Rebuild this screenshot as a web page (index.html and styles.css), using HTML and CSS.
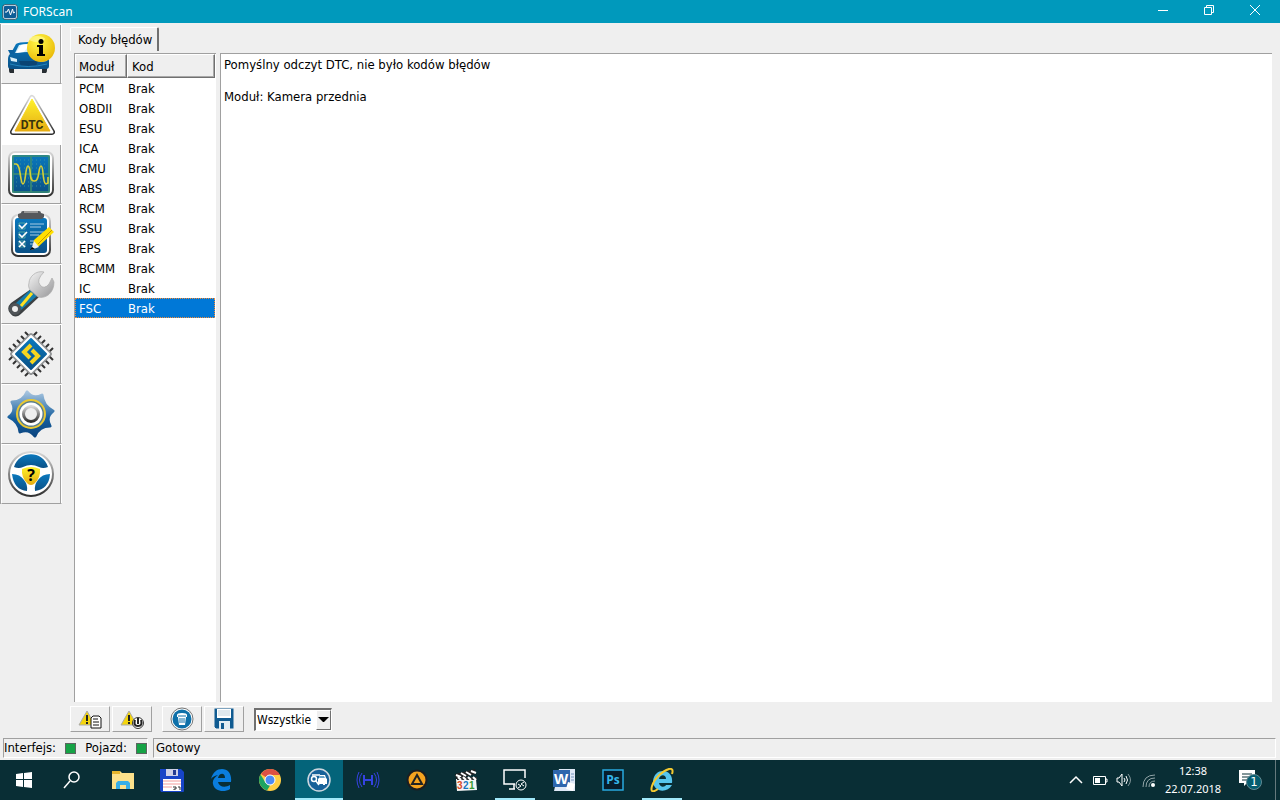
FILE: index.html
```html
<!DOCTYPE html>
<html lang="pl">
<head>
    <meta charset="UTF-8">
    <meta name="viewport" content="width=device-width, initial-scale=1.0">
    <title>FORScan</title>
    <link rel="stylesheet" href="styles.css">
</head>
<body>

    <!-- Shared gradients -->
    <svg class="defs" aria-hidden="true">
        <defs>
            <linearGradient id="blue" x1="0" y1="0" x2="0" y2="1">
                <stop offset="0" stop-color="#0a78bd"/><stop offset="1" stop-color="#0a5187"/>
            </linearGradient>
            <linearGradient id="metal" x1="0" y1="0" x2="0" y2="1">
                <stop offset="0" stop-color="#d8d8d8"/><stop offset="1" stop-color="#303030"/>
            </linearGradient>
            <linearGradient id="yellow" x1="0" y1="0" x2="0" y2="1">
                <stop offset="0" stop-color="#fff22b"/><stop offset="1" stop-color="#e5ac12"/>
            </linearGradient>
            <linearGradient id="gearBlue" x1="0" y1="0" x2="0" y2="1">
                <stop offset="0" stop-color="#a6c4df"/><stop offset="0.6" stop-color="#165f9e"/><stop offset="1" stop-color="#0b4580"/>
            </linearGradient>
            <linearGradient id="silver" x1="0" y1="0" x2="1" y2="1">
                <stop offset="0" stop-color="#f5f5f5"/><stop offset="1" stop-color="#969698"/>
            </linearGradient>
            <radialGradient id="ball" cx="0.4" cy="0.3" r="0.8">
                <stop offset="0" stop-color="#fff94a"/><stop offset="1" stop-color="#e8b200"/>
            </radialGradient>
        </defs>
    </svg>

    <header class="titlebar">
        <svg class="app-icon" viewBox="0 0 16 16" aria-hidden="true">
            <rect x="1" y="1" width="14" height="14" rx="3" fill="#0d5d96" stroke="#e8eef2" stroke-width="1.3"/>
            <rect x="0.4" y="0.4" width="15.2" height="15.2" rx="3.5" fill="none" stroke="#173f55" stroke-width="0.8"/>
            <path d="M3 8h2l1.500-3 2 6 2-6 1 4 1.500-1" fill="none" stroke="#fff"/>
        </svg>
        <h1>FORScan</h1>
        <div class="window-buttons">
            <button type="button" aria-label="Minimalizuj">
                <svg viewBox="0 0 10 10"><path d="M0 5.500h10" stroke="#fff"/></svg>
            </button>
            <button type="button" aria-label="Przywróć">
                <svg viewBox="0 0 10 10"><path d="M2.500 2.500v-2h7v7h-2M.5 2.500h7v7h-7z" fill="none" stroke="#fff"/></svg>
            </button>
            <button type="button" aria-label="Zamknij">
                <svg viewBox="0 0 10 10"><path d="M0 0l10 10M10 0L0 10" stroke="#fff"/></svg>
            </button>
        </div>
    </header>

    <main class="workspace">
        <nav class="sidebar">
            <button type="button" aria-label="Pojazd">
                <svg viewBox="0 0 48 48">
                    <path d="M2 35h5v8H3q-1 0-1-3zM35 35h5v5q0 3-1 3h-4z" fill="#282e33"/>
                    <path d="M9 14q2-2 13-2 10 0 12 2l5 10q3 2 3 7v5q0 3-3 3H4q-3 0-3-3v-7q0-4 3-6z" fill="url(#blue)"/>
                    <path d="M1 20h6v4H3zM38 21h3v3h-3z" fill="#0a61a0"/>
                    <path d="M12 15q9-2 19 0l4 8q-14-2-27 0z" fill="#d4f0fa"/>
                    <path d="M14 15q5-1 9-1l-6 8-8 1z" fill="#fff"/>
                    <path d="M3 27l7 2v3l-6-1zM32 29l8-2v4l-7 1z" fill="#d7edf7"/>
                    <path d="M12 31h19l-2 5H14z" fill="#0a4474"/>
                    <path d="M3 34q18 5 37 0" fill="none" stroke="#2384bc"/>
                    <circle cx="34" cy="18" r="14" fill="url(#ball)"/>
                    <ellipse cx="30" cy="9" rx="8" ry="3" fill="#fffba0" opacity=".6"/>
                    <circle cx="34" cy="11.500" r="2.500"/>
                    <path d="M30 15h6v9h2v2h-8v-2h2v-7h-2z"/>
                </svg>
            </button>
            <button type="button" class="active" aria-label="Kody błędów">
                <svg viewBox="0 0 48 48">
                    <path d="M25 8L45 42H6z" fill="none" stroke="url(#metal)" stroke-width="6" stroke-linejoin="round"/>
                    <path d="M25 8L45 42H6z" fill="#fff" stroke="#fff" stroke-width="3" stroke-linejoin="round"/>
                    <path d="M25 9L43 41H8z" fill="url(#yellow)" stroke="url(#yellow)" stroke-linejoin="round"/>
                    <text x="25" y="39" class="dtc-text">DTC</text>
                </svg>
            </button>
            <button type="button" aria-label="Oscyloskop">
                <svg viewBox="0 0 48 48">
                    <rect x="2" y="2" width="44" height="44" rx="6" fill="#fff" stroke="url(#metal)" stroke-width="2"/>
                    <rect x="5" y="5" width="38" height="38" rx="3" fill="url(#blue)"/>
                    <path d="M9 10h31M9 14h31M9 18h31M9 28h31M9 32h31M9 36h31" stroke="#4fa29c" stroke-width=".7" stroke-dasharray="1 3"/>
                    <path d="M24 6v36M6 24h36M6 6h36v36H6z" fill="none" stroke="#3c8e72" stroke-width="1.500"/>
                    <path d="M7 14h2c5 0 4 20 7 20s2-17 5-18c4 1 0 15 6 15 6 1 4-15 7-15s1 17 5 18l2-1v-6" fill="none" stroke="#d8cf35" stroke-width="1.600"/>
                </svg>
            </button>
            <button type="button" aria-label="Testy">
                <svg viewBox="0 0 48 48">
                    <rect x="5" y="5" width="38" height="41" rx="6" fill="#fff" stroke="url(#metal)" stroke-width="2"/>
                    <rect x="8" y="8" width="32" height="35" rx="3" fill="url(#blue)"/>
                    <path d="M16 1h16q2 0 2 2l3 1v3q-1 2-3 2H14q-2 0-3-2V4l3-1q0-2 2-2z" fill="#55585c"/>
                    <path d="M17 2h14" stroke="#999" stroke-width="2"/>
                    <path d="M12 13h6v6h-6zM12 22h6v6h-6zM12 31h6v6h-6z" fill="none" stroke="#5db1a1" stroke-width=".8"/>
                    <path d="M12 15l3 3 5-5M12 24l3 3 5-5M12 31l6 6M18 31l-6 6" fill="none" stroke="#fff" stroke-width="1.600"/>
                    <path d="M23 14h14M23 17h11M23 22h14M23 25h9M23 31h8M23 34h5" stroke="#a5cbe4"/>
                    <path d="M42 17l5 5-15 14-6 1 1-7z" fill="#ffdf00"/>
                    <path d="M45 20L31 34" stroke="#c59500"/>
                    <path d="M27 31l5 6-8 3z" fill="#eee"/><path d="M25 37l3 2-5 1z"/>
                </svg>
            </button>
            <button type="button" aria-label="Serwis">
                <svg viewBox="0 0 48 48">
                    <path d="M24 19L32 27 15 43Q8 50 3 43-1 38 4 33z" fill="#3c4043"/>
                    <path d="M23 20l7 6-16 14-6-6z" fill="#147cac"/>
                    <path d="M25 23L14 36" stroke="#ffdf20" stroke-width="3"/>
                    <circle cx="8" cy="39" r="4.500" fill="#efefef" stroke="#505458" stroke-width="3"/>
                    <path d="M37 2C29 0 22 7 22 13c-1 3 0 5 1 7l8 7c8 2 16-4 16-15l-2-4-3 6q-5 6-9 1-4-5 4-13z" fill="url(#silver)" stroke="#aaa" stroke-width=".7"/>
                </svg>
            </button>
            <button type="button" aria-label="Programowanie modułów">
                <svg viewBox="0 0 48 48">
                    <path d="M2 18l28 28M6 14l28 28M10 10l28 28M14 6l28 28M18 2l28 28M2 30L30 2M6 34L34 6M10 38L38 10M14 42l28-28M18 46l28-28" stroke="#333" stroke-width="2"/>
                    <path d="M24 5l19 19-19 19L5 24z" fill="#fff" stroke="#939597" stroke-width="4" stroke-linejoin="round"/>
                    <path d="M24 6l18 18-18 18L6 24z" fill="#fff" stroke="#fff" stroke-width="2" stroke-linejoin="round"/>
                    <path d="M24 9l15 15-15 15L9 24z" fill="url(#blue)" stroke="url(#blue)" stroke-width="2" stroke-linejoin="round"/>
                    <path d="M24 15l-7 7 6 6M25 20l6 6-7 7" fill="none" stroke="#f7d51f" stroke-width="4"/>
                </svg>
            </button>
            <button type="button" aria-label="Ustawienia">
                <svg viewBox="0 0 48 48">
                    <path d="M20 2Q26 10 35 5 36 16 46 21 38 27 43 36 32 36 28 46 22 38 13 42 12 32 2 27 10 21 5 12 16 12 20 2z" fill="url(#gearBlue)" stroke="url(#gearBlue)" stroke-width="3" stroke-linejoin="round"/>
                    <circle cx="24" cy="24" r="14" fill="#5a7e8d" stroke="#e9c832" stroke-width="2"/>
                    <circle cx="24" cy="24" r="11.500" fill="#fff"/>
                    <circle cx="24" cy="24" r="7.500" fill="#efefef" stroke="url(#metal)" stroke-width="3"/>
                </svg>
            </button>
            <button type="button" aria-label="Pomoc">
                <svg viewBox="0 0 48 48">
                    <circle cx="24" cy="24" r="22" fill="#fff" stroke="url(#metal)" stroke-width="2"/>
                    <path d="M7 17C12 0 36 0 41 17q-5 2-9 0-8-4-16 0-4 2-9 0z" fill="url(#blue)"/>
                    <path d="M5 24q8 0 12 6 4 5 3 11Q7 40 5 24zM43 24q-8 0-12 6-4 5-3 11 14-2 15-17z" fill="url(#blue)"/>
                    <path d="M15 19q9-4 18 0 1 9-6 15-3 2-6 0-7-6-6-15z" fill="url(#yellow)"/>
                    <text x="24" y="31" class="help-text">?</text>
                </svg>
            </button>
        </nav>

        <section class="content">
            <div class="tabs">
                <button type="button" class="tab">Kody błędów</button>
            </div>

            <div class="panes">
                <div class="module-list">
                    <table>
                        <thead>
                            <tr><th>Moduł</th><th>Kod</th></tr>
                        </thead>
                        <tbody>
                            <tr><td>PCM</td><td>Brak</td></tr>
                            <tr><td>OBDII</td><td>Brak</td></tr>
                            <tr><td>ESU</td><td>Brak</td></tr>
                            <tr><td>ICA</td><td>Brak</td></tr>
                            <tr><td>CMU</td><td>Brak</td></tr>
                            <tr><td>ABS</td><td>Brak</td></tr>
                            <tr><td>RCM</td><td>Brak</td></tr>
                            <tr><td>SSU</td><td>Brak</td></tr>
                            <tr><td>EPS</td><td>Brak</td></tr>
                            <tr><td>BCMM</td><td>Brak</td></tr>
                            <tr><td>IC</td><td>Brak</td></tr>
                            <tr class="selected"><td>FSC</td><td>Brak</td></tr>
                        </tbody>
                    </table>
                </div>
                <div class="details">
                    <p>Pomyślny odczyt DTC, nie było kodów błędów</p>
                    <p>Moduł: Kamera przednia</p>
                </div>
            </div>

            <div class="toolbar">
                <button type="button" aria-label="Odczytaj kody">
                    <svg viewBox="0 0 24 24">
                        <path d="M9 4l8 14H1z" fill="#f4d40c" stroke="#aaa" stroke-linejoin="round"/>
                        <path d="M9 8v6M9 15v2" stroke="#222" stroke-width="2"/>
                        <path d="M15 9h6l2 2v10H13V11z" fill="#fff" stroke="#111" stroke-linejoin="round"/>
                        <path d="M15 12h5M15 15h6M15 18h6" stroke="#111"/>
                    </svg>
                </button>
                <button type="button" aria-label="Autotest">
                    <svg viewBox="0 0 24 24">
                        <path d="M9 4l8 14H1z" fill="#f4d40c" stroke="#aaa" stroke-linejoin="round"/>
                        <path d="M9 8v6M9 15v2" stroke="#222" stroke-width="2"/>
                        <circle cx="18" cy="16" r="5.500" fill="#fff" stroke="#333"/>
                        <path d="M15 13q-2 6 3 6t3-6M18 11v6" fill="none" stroke="#222" stroke-width="2"/>
                    </svg>
                </button>
                <button type="button" class="group-start" aria-label="Wyczyść kody">
                    <svg viewBox="0 0 24 24">
                        <circle cx="12" cy="12" r="11" fill="#fff" stroke="#777"/>
                        <circle cx="12" cy="12" r="9.500" fill="#0e70a9"/>
                        <path d="M7 8q0-2 5-2t5 2v2H7zM8 10h8l-1 8H9z" fill="#fff"/>
                        <path d="M8 9h8M10 11v5M12 11v5M14 11v5" stroke="#0e70a9"/>
                    </svg>
                </button>
                <button type="button" aria-label="Zapisz">
                    <svg viewBox="0 0 24 24">
                        <path d="M2 1h20v21H4l-2-2z" fill="#105b91" stroke="#eee"/>
                        <path d="M5 2h14v9H5z" fill="#fff"/><path d="M6 4h12M6 6h12M6 8h12" stroke="#bed1dc"/>
                        <path d="M7 14h11v8H7z" fill="#e1edf3"/><path d="M9 16h3v6H9z" fill="#105b91"/>
                    </svg>
                </button>
                <div class="filter">
                    <select aria-label="Filtr kodów">
                        <option>Wszystkie</option>
                    </select>
                    <span class="filter-arrow"></span>
                </div>
            </div>
        </section>
    </main>

    <footer class="statusbar">
        <div class="connections">
            <span>Interfejs:</span><i class="led"></i>
            <span>Pojazd:</span><i class="led"></i>
        </div>
        <div class="status">Gotowy</div>
    </footer>

    <div class="taskbar">
        <button type="button" aria-label="Start">
            <svg viewBox="0 0 24 24"><path d="M4 6l7-1v6H4zM12 5l8-1v7h-8zM4 12h7v7l-7-1zM12 12h8v8l-8-1z" fill="#fff"/></svg>
        </button>
        <button type="button" aria-label="Szukaj">
            <svg viewBox="0 0 24 24"><circle cx="14" cy="9" r="5" fill="none" stroke="#fff" stroke-width="1.500"/><path d="M10 13l-6 7" stroke="#fff" stroke-width="1.500"/></svg>
        </button>
        <button type="button" class="app" aria-label="Eksplorator plików">
            <svg viewBox="0 0 24 24"><path d="M1 3h8l2 2h12v16H1z" fill="#fce18b"/><path d="M1 3h8v3H1z" fill="#e5b52d"/><path d="M5 21v-6l2-2h10l2 2v6h-4v-4H9v4z" fill="#37afe7"/></svg>
        </button>
        <button type="button" class="app" aria-label="Total Commander">
            <svg viewBox="0 0 24 24"><path d="M0 1h21l3 3v19q0 1-1 1H1l-1-2z" fill="#1744c7"/><path d="M6 1h12v7H6z" fill="#cdd0e7"/><path d="M13 2h3v5h-3z" fill="#243b91"/><path d="M3 11h18v12H3z" fill="#fff"/><path d="M3 13h18M3 16h18M3 19h9" stroke="#f29b9b"/><path d="M13 19h3v2h-2v1M18 19h2v3" fill="none" stroke="#333"/></svg>
        </button>
        <button type="button" class="app" aria-label="Edge">
            <svg viewBox="0 0 24 24"><path d="M2 11C4 4 8 1 13 1c6 0 10 5 9 13H9c1 5 7 6 12 3v4c-6 4-16 2-17-5-1-4 2-7 5-9-4 1-6 2-7 4zm7-1h7c0-6-6-5-7 0z" fill="#0a7ddd"/></svg>
        </button>
        <button type="button" class="app" aria-label="Chrome">
            <svg viewBox="0 0 24 24"><circle cx="12" cy="12" r="11" fill="#ffce43"/><path d="M12 12L3 6A11 11 0 0 1 22 7H12z" fill="#dd5144"/><path d="M2.500 6.500l5 8 4.500 3-3 5A11 11 0 0 1 2.500 6.500z" fill="#1da462"/><circle cx="12" cy="12" r="5" fill="#4c8bf5" stroke="#fff"/></svg>
        </button>
        <button type="button" class="app current" aria-label="FORScan">
            <svg viewBox="0 0 24 24"><circle cx="12" cy="12" r="11" fill="#176199" stroke="#ccd7df" stroke-width="1.500"/><circle cx="7" cy="11" r="2.500" fill="none" stroke="#fff" stroke-width="1.500"/><path d="M5 7h8" stroke="#fff" stroke-width="1.500"/><path d="M13 7h5l1 3 1 1v5h-2v1h-2v-1h-5v-5l1-1z" fill="#fff"/><path d="M13 8h4l1 2h-6z" fill="#67a2c9"/><path d="M9 13l3 4" stroke="#fff" stroke-width="1.500"/></svg>
        </button>
        <button type="button" class="app" aria-label="Połączenie">
            <svg viewBox="0 0 24 24" fill="none" stroke="#3543e2"><path d="M8 7v10M16 7v10M8 12h8" stroke-width="2"/><path d="M6 5Q1 12 6 19M3 4q-4 8 0 16M18 5q5 7 0 14M21 4q4 8 0 16" stroke-width="1"/></svg>
        </button>
        <button type="button" class="app" aria-label="AIMP">
            <svg viewBox="0 0 24 24"><circle cx="12" cy="12" r="10.500" fill="#1c1d20"/><circle cx="12" cy="12" r="8.500" fill="#f6a31f"/><path d="M12 7l5 9H7z" fill="none" stroke="#222" stroke-width="2"/></svg>
        </button>
        <button type="button" class="app" aria-label="Media Player Classic">
            <svg viewBox="0 0 24 24"><path d="M1 6l20-5 1 5-20 5z" fill="#222"/><path d="M2 7l5 2M7 5l5 3M12 4l5 3M17 3l5 2" stroke="#fff" stroke-width="2"/><path d="M2 11h20l1 11-20 1z" fill="#f5f5f5"/><path d="M3 9h20v3H3z" fill="#333"/><path d="M4 9l3 3M9 9l3 3M14 9l3 3M19 9l3 3" stroke="#fff" stroke-width="2"/><g class="clip-text"><text x="3" y="21" fill="#da4c27">3</text><text x="9" y="21" fill="#1979c3">2</text><text x="15" y="21" fill="#3a9a35">1</text></g></svg>
        </button>
        <button type="button" class="app running" aria-label="Pulpit zdalny">
            <svg viewBox="0 0 24 24" fill="none" stroke="#fff" stroke-width="1.500"><path d="M12 16H1V2h21v8M6 21h6M11 16v5"/><circle cx="18" cy="17" r="5" stroke-width="1"/><path d="M15 16l3 2-3 2M21 14l-3 2 3 2" stroke-width="1"/></svg>
        </button>
        <button type="button" class="app" aria-label="Word">
            <svg viewBox="0 0 24 24"><path d="M7 1h16v22H2z" fill="#dfe9f7"/><path d="M1 2h17v17H1z" fill="#2e66ad"/><path d="M19 6h3M19 9h3M19 12h3" stroke="#7695be"/><path d="M16 14l7 2-2 7-7-2z" fill="#fff"/><text x="2" y="16" class="word-text">W</text></svg>
        </button>
        <button type="button" class="app" aria-label="Photoshop">
            <svg viewBox="0 0 24 24"><rect x="2" y="2" width="20" height="20" fill="#071d2b" stroke="#29a9df" stroke-width="1.500"/><text x="12" y="16" class="ps-text">Ps</text></svg>
        </button>
        <button type="button" class="app running" aria-label="Internet Explorer">
            <svg viewBox="0 0 24 24"><path d="M3 13C4 6 8 3 13 3c6 0 10 5 9 12H9c1 5 6 4 7 2h6c-5 9-19 7-19-4zm6-2h7c0-5-6-5-7 0z" fill="#56c5ed"/><path d="M8 21C4 24 0 25 2 18 4 11 12 3 19 1q5-1 3 5" fill="none" stroke="#f3c930" stroke-width="2"/></svg>
        </button>

        <div class="tray">
            <svg class="tray-icon" viewBox="0 0 16 16"><path d="M2 11l6-6 6 6" fill="none" stroke="#fff" stroke-width="1.500"/></svg>
            <svg class="tray-icon" viewBox="0 0 16 16"><path d="M1.500 4.500h12v8h-12zM14 7h1v3h-1" fill="none" stroke="#fff"/><path d="M3 6h5v5H3z" fill="#fff"/></svg>
            <svg class="tray-icon" viewBox="0 0 16 16"><path d="M1 6h2l3-4v12l-3-4H1zM8 6q2 2 0 4M10 4q3 4 0 8" fill="none" stroke="#fff"/><path d="M12 2q5 6 0 12" fill="none" stroke="#829599"/></svg>
            <svg class="tray-icon wifi" viewBox="0 0 16 16"><path d="M3 15Q3 3 15 3M6 15q0-9 9-9M9 15q0-6 6-6" fill="none" stroke="#91a4a7"/><circle cx="13" cy="13" r="2" fill="#fff"/></svg>
            <div class="clock">
                <time>12:38</time>
                <time>22.07.2018</time>
            </div>
            <button type="button" class="notifications" aria-label="Powiadomienia">
                <svg viewBox="0 0 24 24"><path d="M1 2h16v13H9l-3 3v-3H1z" fill="#fff"/><path d="M4 6h10M4 9h10M4 12h7" stroke="#092e35"/></svg>
                <span class="badge">1</span>
            </button>
        </div>
    </div>

</body>
</html>
```
FILE: styles.css
```css
* {
    box-sizing: border-box;
}

body {
    display: flex;
    flex-direction: column;
    min-height: 100vh;
    margin: 0;
    background-color: #efefef;
    color: #000;
    font-family: Tahoma, "DejaVu Sans Condensed", "DejaVu Sans", sans-serif;
    font-stretch: condensed;
    font-size: 13px;
    line-height: 16px;
}

button,
select {
    padding: 0;
    border: none;
    background: none;
    color: inherit;
    font: inherit;
}

svg {
    display: block;
}

.defs {
    position: absolute;
    width: 0;
    height: 0;
}

/* Title bar */
.titlebar {
    display: flex;
    align-items: center;
    height: 23px;
    padding-left: 2px;
    background-color: #0099bc;
    color: #fff;
}

.app-icon {
    width: 16px;
    height: 16px;
}

h1 {
    margin: 0 0 0 5px;
    font-family: "Noto Sans", sans-serif;
    font-size: 12px;
    font-weight: normal;
}

.window-buttons {
    display: flex;
    align-self: flex-start;
    height: 20px;
    margin-left: auto;
    padding-right: 2px;
}

.window-buttons button {
    display: flex;
    align-items: center;
    justify-content: center;
    width: 46px;
}

.window-buttons svg {
    width: 10px;
    height: 10px;
}

/* Main area */
.workspace {
    display: flex;
    flex: 1;
    padding-top: 1px;
}

.sidebar {
    display: flex;
    flex-direction: column;
    align-self: flex-start;
    width: 62px;
    border-left: 1px solid #a0a0a0;
}

.sidebar button {
    display: flex;
    align-items: center;
    justify-content: center;
    height: 60px;
    padding-right: 1px;
    border: 1px solid #fff;
    border-bottom-color: #a0a0a0;
    box-shadow: inset -1px 0 #a0a0a0;
}

.sidebar button.active {
    background-color: #fff;
    border-bottom-color: #fff;
    box-shadow: none;
}

.sidebar svg {
    width: 48px;
    height: 48px;
}

.dtc-text {
    font: bold 12px Roboto, sans-serif;
    text-anchor: middle;
    fill: #39340d;
}

.help-text {
    font: bold 16px "Open Sans", sans-serif;
    text-anchor: middle;
}

.content {
    display: flex;
    flex: 1;
    flex-direction: column;
    padding: 3px 8px 0 8px;
}

.tabs {
    display: flex;
    height: 26px;
}

.tab {
    height: 24px;
    padding: 0 5px 0 7px;
    border-top: 1px solid #fff;
    border-left: 1px solid #fff;
    border-right: 2px solid #707070;
    border-radius: 2px 2px 0 0;
}

.panes {
    display: flex;
    flex: 1;
    gap: 4px;
    padding-left: 4px;
}

.module-list {
    width: 142px;
    padding-right: 1px;
    border-top: 1px solid #a0a0a0;
    border-left: 1px solid #a0a0a0;
    background-color: #fff;
}

table {
    width: 100%;
    border-collapse: separate;
    border-spacing: 0;
    table-layout: fixed;
}

th {
    height: 24px;
    padding: 1px 4px 0;
    background-color: #efefef;
    border: 1px solid #fff;
    border-right-color: #707070;
    border-bottom-color: #707070;
    box-shadow: inset -1px -1px #a8a8a8;
    font-weight: normal;
    text-align: left;
}

th:first-child {
    width: 52px;
    padding-left: 3px;
}

td {
    height: 20px;
    padding: 1px 0 0 4px;
}

td:last-child {
    padding-left: 1px;
}

.selected {
    background-color: #0078d7;
    color: #fff;
    outline: 1px dotted #f38b37;
    outline-offset: -1px;
}

.details {
    flex: 1;
    padding: 3px;
    border-top: 1px solid #a0a0a0;
    border-left: 1px solid #a0a0a0;
    background-color: #fff;
}

.details p {
    margin: 0 0 16px;
}

.toolbar {
    display: flex;
    align-items: center;
    gap: 2px;
    height: 36px;
    padding-bottom: 2px;
}

.toolbar button {
    display: flex;
    align-items: center;
    justify-content: center;
    width: 40px;
    height: 26px;
    border: 1px solid #fff;
    border-right-color: #a0a0a0;
    border-bottom-color: #a0a0a0;
}

.toolbar .group-start {
    margin-left: 8px;
}

.toolbar svg {
    width: 24px;
    height: 24px;
}

.filter {
    position: relative;
    margin-left: 8px;
}

.filter select {
    appearance: none;
    display: block;
    width: 78px;
    height: 23px;
    padding-left: 1px;
    border: 2px solid #707070;
    border-right: 1px solid #fff;
    border-bottom: 1px solid #fff;
    border-radius: 0;
    background-color: #fff;
    font-size: 12px;
}

.filter-arrow {
    position: absolute;
    top: 2px;
    right: 1px;
    width: 15px;
    height: 20px;
    border: 1px solid #fff;
    border-right-color: #707070;
    border-bottom-color: #707070;
    background-color: #efefef;
    pointer-events: none;
}

.filter-arrow::after {
    content: "";
    display: block;
    margin: 6px 1px;
    border: 5px solid transparent;
    border-top-color: #000;
    border-bottom: none;
}

/* Status bar */
.statusbar {
    display: flex;
    gap: 5px;
    height: 22px;
    padding: 0 4px 2px 3px;
}

.statusbar div {
    display: flex;
    align-items: center;
    border: 1px solid #a0a0a0;
    border-right-color: #fff;
    border-bottom-color: #fff;
}

.connections {
    width: 145px;
    justify-content: space-between;
}

.status {
    flex: 1;
    padding-left: 2px;
}

.led {
    width: 11px;
    height: 11px;
    border: 1px solid #5c6660;
    background-color: #16a346;
}

/* Windows taskbar */
.taskbar {
    display: flex;
    height: 40px;
    background-color: #092e35;
    color: #fff;
}

.taskbar > button {
    display: flex;
    align-items: center;
    justify-content: center;
    width: 48px;
    margin-right: 1px;
}

.taskbar > button:first-child {
    margin-right: 0;
}

.taskbar > button:nth-child(2) {
    margin-right: 3px;
}

.taskbar svg {
    width: 24px;
    height: 24px;
}

.taskbar .current {
    background-color: #04647a;
    box-shadow: inset 0 -2px #a1e9fa;
}

.taskbar .running {
    background: linear-gradient(#a1e9fa, #a1e9fa) center bottom / 40px 2px no-repeat;
}

.clip-text {
    font: bold 10px "Liberation Sans", sans-serif;
}

.word-text {
    font: bold 15px "Liberation Sans", sans-serif;
    fill: #fff;
}

.ps-text {
    font: bold 12px "Open Sans", sans-serif;
    text-anchor: middle;
    fill: #35b6e9;
}

.tray {
    display: flex;
    align-items: center;
    gap: 8px;
    margin-left: auto;
    margin-right: 4px;
    padding-right: 3px;
    border-right: 1px solid #65797d;
}

.taskbar .tray-icon {
    width: 16px;
    height: 16px;
}

.clock {
    width: 58px;
    font-family: "Noto Sans", sans-serif;
    font-size: 11px;
    line-height: 18px;
    text-align: center;
}

.clock time {
    display: block;
}

.notifications {
    position: relative;
    width: 42px;
    padding-left: 8px;
}

.badge {
    position: absolute;
    top: 6px;
    left: 16px;
    width: 16px;
    height: 16px;
    border: 1px solid #628b94;
    border-radius: 50%;
    background-color: #065d70;
    line-height: 14px;
}
```
